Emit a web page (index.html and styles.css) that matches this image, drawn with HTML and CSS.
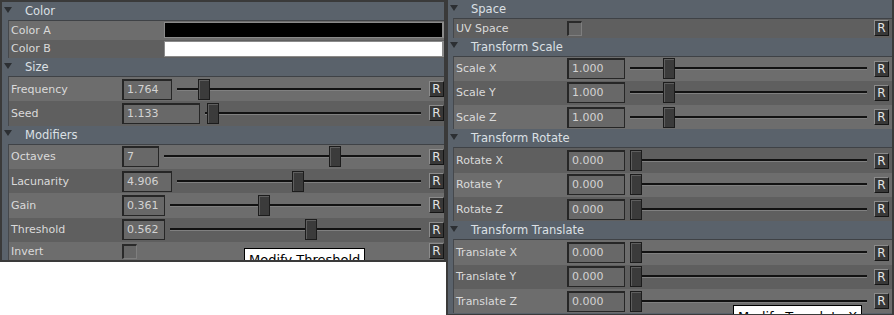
FILE: index.html
```html
<!DOCTYPE html>
<html>
<head>
<meta charset="utf-8">
<link rel="stylesheet" href="styles.css">
</head>
<body>
<div class="screens">
  <div class="panel panel-left">
    <section class="group">
      <div class="group-head"><span class="tri"></span><span class="title">Color</span></div>
      <div class="rows">
        <div class="row short light"><span class="label">Color A</span><span class="swatch swatch-black"></span></div>
        <div class="row short dark"><span class="label">Color B</span><span class="swatch swatch-white"></span></div>
      </div>
    </section>
    <section class="group">
      <div class="group-head"><span class="tri"></span><span class="title">Size</span></div>
      <div class="rows">
        <div class="row slide light"><span class="label">Frequency</span><span class="num w50">1.764</span><span class="track"><span class="thumb" style="left:21px"></span></span><span class="reset">R</span></div>
        <div class="row slide dark"><span class="label">Seed</span><span class="num w78">1.133</span><span class="track"><span class="thumb" style="left:2px"></span></span><span class="reset">R</span></div>
      </div>
    </section>
    <section class="group">
      <div class="group-head"><span class="tri"></span><span class="title">Modifiers</span></div>
      <div class="rows">
        <div class="row slide light"><span class="label">Octaves</span><span class="num w37">7</span><span class="track"><span class="thumb" style="left:165px"></span></span><span class="reset">R</span></div>
        <div class="row slide dark"><span class="label">Lacunarity</span><span class="num w50">4.906</span><span class="track"><span class="thumb" style="left:115px"></span></span><span class="reset">R</span></div>
        <div class="row slide light"><span class="label">Gain</span><span class="num w43">0.361</span><span class="track"><span class="thumb" style="left:88px"></span></span><span class="reset">R</span></div>
        <div class="row slide dark"><span class="label">Threshold</span><span class="num w43">0.562</span><span class="track"><span class="thumb" style="left:135px"></span></span><span class="reset">R</span></div>
        <div class="row short light"><span class="label">Invert</span><span class="check"></span><span class="spacer"></span><span class="reset">R</span></div>
      </div>
    </section>
    <div class="tooltip tip-left">Modify Threshold</div>
  </div>

  <div class="panel panel-right">
    <section class="group">
      <div class="group-head"><span class="tri"></span><span class="title">Space</span></div>
      <div class="rows">
        <div class="row short dark"><span class="label">UV Space</span><span class="check"></span><span class="spacer"></span><span class="reset">R</span></div>
      </div>
    </section>
    <section class="group">
      <div class="group-head"><span class="tri"></span><span class="title">Transform Scale</span></div>
      <div class="rows">
        <div class="row slide light"><span class="label">Scale X</span><span class="num w58">1.000</span><span class="track"><span class="thumb" style="left:33px"></span></span><span class="reset">R</span></div>
        <div class="row slide dark"><span class="label">Scale Y</span><span class="num w58">1.000</span><span class="track"><span class="thumb" style="left:33px"></span></span><span class="reset">R</span></div>
        <div class="row slide light"><span class="label">Scale Z</span><span class="num w58">1.000</span><span class="track"><span class="thumb" style="left:33px"></span></span><span class="reset">R</span></div>
      </div>
    </section>
    <section class="group">
      <div class="group-head"><span class="tri"></span><span class="title">Transform Rotate</span></div>
      <div class="rows">
        <div class="row slide dark"><span class="label">Rotate X</span><span class="num w58">0.000</span><span class="track"><span class="thumb" style="left:0px"></span></span><span class="reset">R</span></div>
        <div class="row slide light"><span class="label">Rotate Y</span><span class="num w58">0.000</span><span class="track"><span class="thumb" style="left:0px"></span></span><span class="reset">R</span></div>
        <div class="row slide dark"><span class="label">Rotate Z</span><span class="num w58">0.000</span><span class="track"><span class="thumb" style="left:0px"></span></span><span class="reset">R</span></div>
      </div>
    </section>
    <section class="group">
      <div class="group-head"><span class="tri"></span><span class="title">Transform Translate</span></div>
      <div class="rows">
        <div class="row slide light"><span class="label">Translate X</span><span class="num w58">0.000</span><span class="track"><span class="thumb" style="left:0px"></span></span><span class="reset">R</span></div>
        <div class="row slide dark"><span class="label">Translate Y</span><span class="num w58">0.000</span><span class="track"><span class="thumb" style="left:0px"></span></span><span class="reset">R</span></div>
        <div class="row slide light"><span class="label">Translate Z</span><span class="num w58">0.000</span><span class="track"><span class="thumb" style="left:0px"></span></span><span class="reset">R</span></div>
      </div>
    </section>
    <div class="tooltip tip-right">Modify Translate X</div>
  </div>
</div>
</body>
</html>
```

FILE: styles.css
```css
* { box-sizing: border-box; margin: 0; padding: 0; }
html, body { background: #ffffff; overflow: hidden; }
body {
  width: 894px;
  height: 315px;
  font-family: "DejaVu Sans", sans-serif;
  font-size: 11px;
}
.screens { display: flex; align-items: flex-start; }

.panel {
  position: relative;
  overflow: hidden;
  background: #5a626b;
  border-left: 2px solid #3a3a3a;
  border-right: 2px solid #3a3a3a;
}
.panel-left {
  width: 446px;
  height: 262px;
  border-top: 2px solid #3a3a3a;
  border-bottom: 2px solid #3a3a3a;
}
.panel-right {
  width: 448px;
  height: 316px;
  border-bottom: 2px solid #3a3a3a;
}

.group-head {
  height: 18px;
  display: flex;
  align-items: center;
  color: #dce0e5;
  font-size: 11.5px;
}
.tri {
  width: 0;
  height: 0;
  border-left: 4px solid transparent;
  border-right: 4px solid transparent;
  border-top: 6px solid #2c2f33;
  margin-left: 2px;
  margin-right: 13px;
  margin-top: -3px;
}
.rows {
  margin-left: 6px;
  border-top: 1px solid #3f4246;
  border-left: 1px solid #45484c;
}
.panel-right .rows { margin-left: 5px; }

.row {
  display: flex;
  align-items: center;
  color: #dadada;
}
.row.short { height: 18.5px; }
.row.slide { height: 24.33px; }
.row.light { background: #6d6d6d; }
.row.dark { background: #5f5f5f; }

.label {
  width: 113px;
  flex: none;
  padding-left: 2px;
  white-space: nowrap;
}

.swatch {
  flex: 1;
  height: 16px;
  margin-left: 42px;
  border: 1px solid #8a8a8a;
  border-right-width: 2px;
}
.swatch-black { background: #000000; }
.swatch-white { background: #ffffff; }

.num {
  flex: none;
  height: 21px;
  border: 2px solid #262626;
  border-right-width: 1px;
  border-bottom-width: 1px;
  background: #686868;
  color: #d3d3d3;
  padding-left: 3px;
  line-height: 18px;
}
.w37 { width: 37px; }
.w43 { width: 43px; }
.w50 { width: 50px; }
.w58 { width: 58px; }
.w78 { width: 78px; }

.track {
  flex: 1;
  position: relative;
  height: 21px;
  margin-left: 5px;
}
.track::before {
  content: "";
  position: absolute;
  left: 0;
  right: 0;
  top: 9px;
  height: 2px;
  background: #121212;
  box-shadow: 0 1px 0 #808080;
}
.thumb {
  position: absolute;
  top: 0;
  width: 12px;
  height: 21px;
  background: #3b3b3b;
  border: 1px solid #1c1c1c;
  box-shadow: inset 1px 1px 0 #5e5e5e;
}

.check {
  flex: none;
  width: 15px;
  height: 15px;
  border-top: 2px solid #2a2a2a;
  border-left: 2px solid #2a2a2a;
  border-right: 1px solid #7e7e7e;
  border-bottom: 1px solid #7e7e7e;
  background: #666666;
}
.spacer { flex: 1; }

.reset {
  flex: none;
  width: 15px;
  height: 16px;
  margin-left: 8px;
  background: #383838;
  border: 1px solid;
  border-color: #8c8c8c #151515 #151515 #8c8c8c;
  color: #e2e2e2;
  font-size: 12px;
  line-height: 14px;
  text-align: center;
}
.panel-right .reset { margin-left: 7px; margin-right: 3px; }

.tooltip {
  position: absolute;
  background: #ffffff;
  border: 1px solid #000000;
  color: #000000;
  font-size: 13px;
  line-height: 16px;
  padding: 3px 4px;
  white-space: nowrap;
}
.tip-left { left: 242px; top: 246px; }
.tip-right { left: 285px; top: 305px; }
```
